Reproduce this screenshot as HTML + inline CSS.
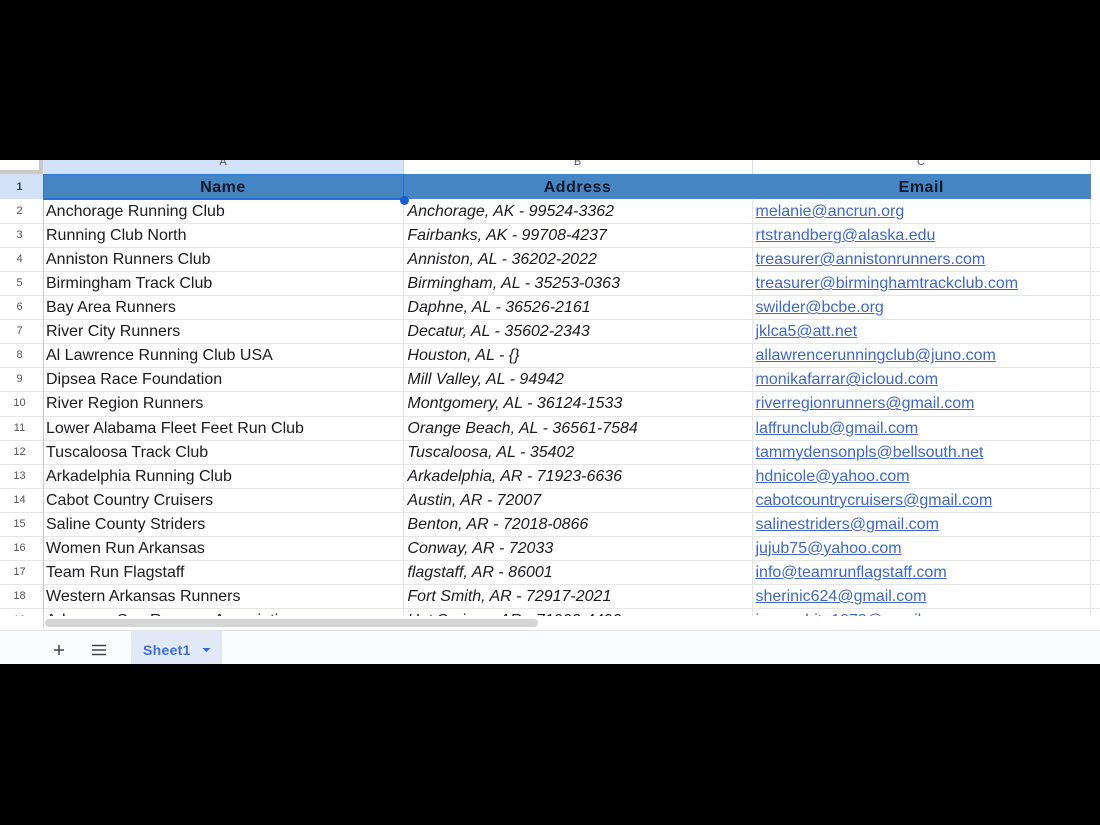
<!DOCTYPE html>
<html><head><meta charset="utf-8">
<style>
html,body{margin:0;padding:0;background:#000;width:1100px;height:825px;overflow:hidden}
#s{position:absolute;left:0;top:160px;width:1100px;height:504px;background:#fff;overflow:hidden;font-family:"Liberation Sans",sans-serif;filter:blur(.3px)}
.a{position:absolute}
#grid{position:absolute;left:0;top:0;width:1100px;height:456px;overflow:hidden}
.r{position:absolute;left:0;width:1100px;height:24.06px;box-sizing:border-box;border-bottom:1px solid #e6e6ea;font-size:16px;color:#1b1b20;line-height:23.5px;white-space:nowrap}
.r span{position:absolute;top:0}
.n{left:0;width:39px;text-align:center;font-size:11px;color:#555}
.c1{left:46px}
.c2{left:407.4px;font-style:italic}
.c3{left:755.5px;color:#3f68c8;text-decoration:underline}
.v{position:absolute;top:14px;width:1px;height:443px;background:#e6e6ea}
.h{position:absolute;top:14px;height:25px;line-height:27px;background:#4585c4;color:#10182a;font-weight:bold;font-size:16px;text-align:center;letter-spacing:.5px}
.ch{position:absolute;top:-9px;font-size:11px;color:#555;text-align:center;line-height:22px}
</style></head><body>
<div id="s">
<div id="grid">
<div class="a" style="left:0;top:0;width:40px;height:10px;background:#fff"></div>
<div class="a" style="left:0;top:10px;width:43px;height:4px;background:#c9c9c9"></div>
<div class="a" style="left:39px;top:0;width:4px;height:14px;background:#c9c9c9"></div>
<div class="a" style="left:43px;top:0;width:360px;height:14px;background:#d3e2f9"></div>
<div class="ch" style="left:43px;width:360px">A</div>
<div class="ch" style="left:403px;width:349px">B</div>
<div class="ch" style="left:752px;width:338px">C</div>
<div class="a" style="left:0;top:14px;width:43px;height:25px;background:#d3e2f9"></div>
<div class="a" style="left:0;top:14px;width:39px;height:25px;line-height:26px;text-align:center;font-size:11px;font-weight:bold;color:#1c4a6e">1</div>
<div class="r" style="top:40px"><span class="n">2</span><span class="c1">Anchorage Running Club</span><span class="c2">Anchorage, AK - 99524-3362</span><span class="c3">melanie@ancrun.org</span></div>
<div class="r" style="top:64.06px"><span class="n">3</span><span class="c1">Running Club North</span><span class="c2">Fairbanks, AK - 99708-4237</span><span class="c3">rtstrandberg@alaska.edu</span></div>
<div class="r" style="top:88.12px"><span class="n">4</span><span class="c1">Anniston Runners Club</span><span class="c2">Anniston, AL - 36202-2022</span><span class="c3">treasurer@annistonrunners.com</span></div>
<div class="r" style="top:112.18px"><span class="n">5</span><span class="c1">Birmingham Track Club</span><span class="c2">Birmingham, AL - 35253-0363</span><span class="c3">treasurer@birminghamtrackclub.com</span></div>
<div class="r" style="top:136.24px"><span class="n">6</span><span class="c1">Bay Area Runners</span><span class="c2">Daphne, AL - 36526-2161</span><span class="c3">swilder@bcbe.org</span></div>
<div class="r" style="top:160.3px"><span class="n">7</span><span class="c1">River City Runners</span><span class="c2">Decatur, AL - 35602-2343</span><span class="c3">jklca5@att.net</span></div>
<div class="r" style="top:184.36px"><span class="n">8</span><span class="c1">Al Lawrence Running Club USA</span><span class="c2">Houston, AL - {}</span><span class="c3">allawrencerunningclub@juno.com</span></div>
<div class="r" style="top:208.42px"><span class="n">9</span><span class="c1">Dipsea Race Foundation</span><span class="c2">Mill Valley, AL - 94942</span><span class="c3">monikafarrar@icloud.com</span></div>
<div class="r" style="top:232.48px"><span class="n">10</span><span class="c1">River Region Runners</span><span class="c2">Montgomery, AL - 36124-1533</span><span class="c3">riverregionrunners@gmail.com</span></div>
<div class="r" style="top:256.54px"><span class="n">11</span><span class="c1">Lower Alabama Fleet Feet Run Club</span><span class="c2">Orange Beach, AL - 36561-7584</span><span class="c3">laffrunclub@gmail.com</span></div>
<div class="r" style="top:280.6px"><span class="n">12</span><span class="c1">Tuscaloosa Track Club</span><span class="c2">Tuscaloosa, AL - 35402</span><span class="c3">tammydensonpls@bellsouth.net</span></div>
<div class="r" style="top:304.66px"><span class="n">13</span><span class="c1">Arkadelphia Running Club</span><span class="c2">Arkadelphia, AR - 71923-6636</span><span class="c3">hdnicole@yahoo.com</span></div>
<div class="r" style="top:328.72px"><span class="n">14</span><span class="c1">Cabot Country Cruisers</span><span class="c2">Austin, AR - 72007</span><span class="c3">cabotcountrycruisers@gmail.com</span></div>
<div class="r" style="top:352.78px"><span class="n">15</span><span class="c1">Saline County Striders</span><span class="c2">Benton, AR - 72018-0866</span><span class="c3">salinestriders@gmail.com</span></div>
<div class="r" style="top:376.84px"><span class="n">16</span><span class="c1">Women Run Arkansas</span><span class="c2">Conway, AR - 72033</span><span class="c3">jujub75@yahoo.com</span></div>
<div class="r" style="top:400.9px"><span class="n">17</span><span class="c1">Team Run Flagstaff</span><span class="c2">flagstaff, AR - 86001</span><span class="c3">info@teamrunflagstaff.com</span></div>
<div class="r" style="top:424.96px"><span class="n">18</span><span class="c1">Western Arkansas Runners</span><span class="c2">Fort Smith, AR - 72917-2021</span><span class="c3">sherinic624@gmail.com</span></div>
<div class="r" style="top:449.02px"><span class="n">19</span><span class="c1">Arkansas Sun Runners Association</span><span class="c2">Hot Springs, AR - 71903-4490</span><span class="c3">jaynewhite1878@gmail.com</span></div>
<div class="v" style="left:42.5px;background:#c9c9cc"></div>
<div class="v" style="left:403px"></div>
<div class="v" style="left:752px"></div>
<div class="v" style="left:1090px"></div>
<div class="a" style="left:752px;top:0;width:1px;height:14px;background:#ddd"></div>
<div class="a" style="left:1090px;top:0;width:1px;height:14px;background:#ddd"></div>
<div class="a" style="left:403px;top:0;width:1px;height:14px;background:#c4cfe0"></div>
<div class="h" style="left:43px;width:360px">Name</div>
<div class="h" style="left:403px;width:349px">Address</div>
<div class="h" style="left:752px;width:338.5px">Email</div>
<div class="a" style="left:43px;top:13.5px;width:361px;height:1.2px;background:#2f7bdc"></div>
<div class="a" style="left:43px;top:38px;width:361px;height:1.6px;background:#2370e0"></div>
<div class="a" style="left:42.5px;top:14px;width:1.2px;height:25px;background:#2f7bdc"></div>
<div class="a" style="left:403px;top:14px;width:1.2px;height:25px;background:#2370e0"></div>
<div class="a" style="left:399.5px;top:35.5px;width:9px;height:9px;border-radius:50%;background:#1a5fd0"></div>
</div>
<div class="a" style="left:0;top:456px;width:1100px;height:14px;background:#fff"></div>
<div class="a" style="left:42.5px;top:456px;width:1px;height:12px;background:#d6d6d8"></div>
<div class="a" style="left:45px;top:459px;width:493px;height:8px;border-radius:4px;background:#d5d5d7"></div>
<div class="a" style="left:0;top:470px;width:1100px;height:34px;background:#f9fbfe;border-top:1px solid #e3e3e8;box-sizing:border-box"></div>
<div class="a" style="left:131px;top:471px;width:91px;height:33px;background:#e1e9f7"></div>
<svg class="a" style="left:52px;top:483px" width="14" height="14" viewBox="0 0 14 14"><path d="M7 2v10M2 7h10" stroke="#444" stroke-width="1.5" fill="none"/></svg>
<svg class="a" style="left:91px;top:483px" width="16" height="14" viewBox="0 0 16 14"><path d="M1 2.5h14M1 7h14M1 11.5h14" stroke="#444" stroke-width="1.5" fill="none"/></svg>
<div class="a" style="left:143px;top:481px;font-size:14px;line-height:18px;font-weight:bold;color:#3f6fd8;letter-spacing:.3px">Sheet1</div>
<svg class="a" style="left:202px;top:487px" width="9" height="6" viewBox="0 0 9 6"><path d="M0.5 1h8L4.5 5z" fill="#2f66d8"/></svg>
</div>
</body></html>
